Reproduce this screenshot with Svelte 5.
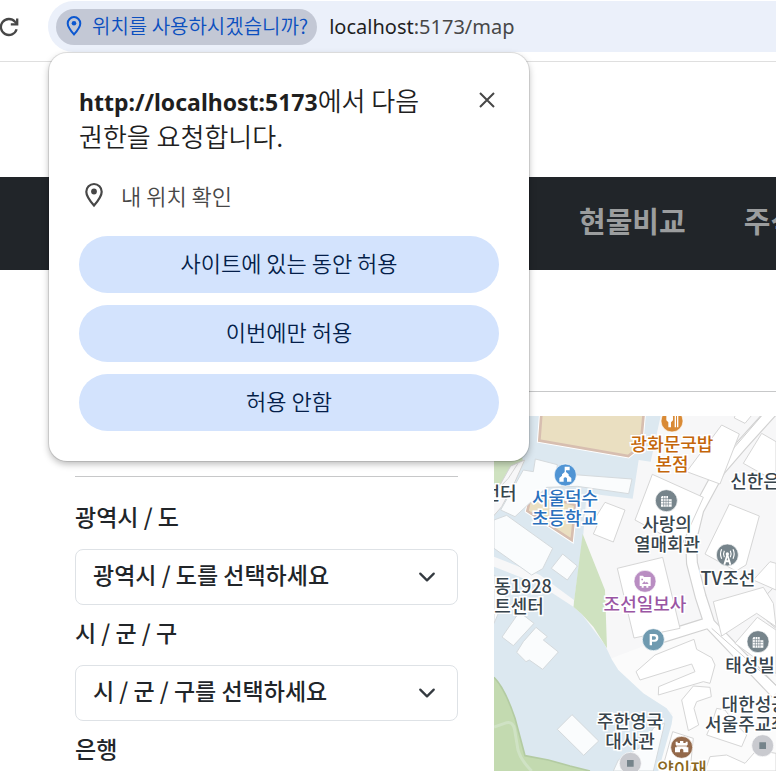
<script>
  const menu = ['현물비교', '주식비교'];

  const fields = [
    { id: 'province', label: '광역시 / 도', placeholder: '광역시 / 도를 선택하세요' },
    { id: 'district', label: '시 / 군 / 구', placeholder: '시 / 군 / 구를 선택하세요' }
  ];

  const choices = ['사이트에 있는 동안 허용', '이번에만 허용', '허용 안함'];

  // Top centre of each label, in map pixels
  const places = [
    { x: 178, y: 17, kind: 'food', lines: ['광화문국밥', '본점'] },
    { x: 71, y: 71, kind: 'school', lines: ['서울덕수', '초등학교'] },
    { x: 6, y: 66, kind: 'plain', lines: ['전터'] },
    { x: 261, y: 54, kind: 'plain', lines: ['신한은'] },
    { x: 173, y: 97, kind: 'plain', lines: ['사랑의', '열매회관'] },
    { x: 234, y: 151, kind: 'plain', lines: ['TV조선'] },
    { x: 151, y: 177, kind: 'art', lines: ['조선일보사'] },
    { x: 29, y: 159, kind: 'plain', lines: ['동1928'] },
    { x: 25, y: 179, kind: 'plain', lines: ['트센터'] },
    { x: 256, y: 238, kind: 'plain', lines: ['태성빌'] },
    { x: 269, y: 277, kind: 'plain', lines: ['대한성공회', '서울주교좌성당'] },
    { x: 136, y: 294, kind: 'plain', lines: ['주한영국', '대사관'] },
    { x: 188, y: 342, kind: 'heritage', lines: ['양이재'] }
  ];
</script>

<div class="browser">
  <header class="toolbar">
    <button class="reload" aria-label="새로고침">
      <svg width="22" height="22" viewBox="0 0 22 22" fill="none" stroke="#474747" stroke-width="2.3">
        <path d="M18.6 13.2A8 8 0 1 1 17 5.8l2 2.1" />
        <path d="M19.2 2.4v6h-6.4" />
      </svg>
    </button>
    <div class="omnibox">
      <button class="chip">
        <svg width="16" height="20" viewBox="0 0 16 20" fill="none" stroke="#0b57d0" stroke-width="2">
          <path d="M8 18.4C4 13.8 1.7 10.6 1.7 7.4a6.3 6.3 0 0 1 12.6 0c0 3.200-2.300 6.400-6.300 11z" />
          <circle cx="8" cy="7.300" r="2.300" fill="#0b57d0" stroke="none" />
        </svg>
        <span>위치를 사용하시겠습니까?</span>
      </button>
      <span class="url"><b>localhost</b>:5173/map</span>
    </div>
  </header>

  <nav class="navbar">
    {#each menu as item}
      <a href="#menu">{item}</a>
    {/each}
  </nav>

  <main>
    <hr />
    <div class="columns">
      <form class="filters">
        <hr />
        {#each fields as field}
          <label for={field.id}>{field.label}</label>
          <div class="select">
            <select id={field.id}>
              <option>{field.placeholder}</option>
            </select>
            <svg width="18" height="18" viewBox="0 0 16 16" fill="none" stroke="#343a40" stroke-width="2" stroke-linecap="round" stroke-linejoin="round">
              <path d="m2 5 6 6 6-6" />
            </svg>
          </div>
        {/each}
        <h2>은행</h2>
      </form>

      <section class="map" aria-label="지도">
        <svg width="282" height="355" viewBox="12 18 846 1065">
          <rect x="12" y="18" width="846" height="1065" fill="#f7f7f8" />
          <path fill="#fbfbfb" d="M351 750 640 640 858 800V1083H500L548 910 460 850z" />

          <!-- school and embassy grounds -->
          <path fill="#dce8f0" d="M12 18H512L482 155 446 150 428 266 290 250 280 372 250 590 275 612 345 705 365 748 385 780 460 850 530 895 548 920 545 942 505 1083H12z" />
          <path fill="#cfe2c0" d="M278 372 345 540 351 715 310 650 275 612 250 590z" />
          <path fill="#cfe2c0" d="M12 18H60L100 155 12 245z" />
          <path fill="#f7f7f8" stroke="#d4d4d4" stroke-width="3" d="M104 150 62 168 30 225 0 265V330L35 290 75 215z" />
          <path fill="none" stroke="#d4d4d4" stroke-width="3" d="M84 160 55 205 0 262" />
          <path fill="#c3dab0" d="M12 802C40 830 60 880 75 925L105 1037 175 1050 240 1068 300 1083H12z" />
          <path fill="none" stroke="#b3cba2" stroke-width="5" d="M12 802C40 830 60 880 75 925L105 1037 175 1050 240 1068 300 1083" />
          <path fill="none" stroke="#cfe2c4" stroke-width="9" d="M12 951 50 938Q70 934 74 960L84 1020Q92 1050 125 1083" />
          <path fill="#f7f7f8" d="M12 440 150 495 252 570 250 590 150 525 12 470z" />

          <!-- sports grounds -->
          <g fill="#eadfc1" stroke="#fff" stroke-width="14">
            <path d="M155 0 148 92 415 138 452 108 462 0z" />
            <path d="M125 248 112 303 245 390 256 285z" />
          </g>
          <g fill="#eadfc1" stroke="#d7beb0" stroke-width="8">
            <path d="M155 0 148 92 415 138 452 108 462 0z" />
            <path d="M125 248 112 303 245 390 256 285z" />
          </g>

          <!-- roads -->
          <g fill="none" stroke-linejoin="round">
            <path stroke="#d2d2d2" stroke-width="36" d="M850 0 755 105 690 180 625 300 603 390 606 460 632 560 658 640 858 850M490 690 650 640" />
            <path stroke="#fff" stroke-width="29" d="M850 0 755 105 690 180 625 300 603 390 606 460 632 560 658 640 858 850M490 690 650 640" />
            <path stroke="#cfcfcf" stroke-width="3" d="M830 0 735 110 665 205M665 655 858 825M858 525 800 585Q795 598 805 610L858 655" />
          </g>

          <!-- buildings -->
          <g fill="#fafcfd" stroke="#d5dadd" stroke-width="3">
            <path d="M136 147 202 164 200 190 426 207 416 251 262 229 170 232 75 320 32 300 100 180 130 185z" />
            <path d="M12 330 50 316 188 415 158 476 125 495 12 415z" />
            <path d="M218 432 262 468 232 510 184 475z" />
            <path d="M12 495 60 530 25 610 12 640z" />
            <path d="M88 606 132 640 70 707 36 681z" />
            <path d="M138 652 172 680 160 690 205 726 158 778 118 750 108 755 80 727 100 695z" />
            <path d="M246 914 326 993 281 1036 202 958z" />
            <path d="M370 1083 385 1050 455 1010 492 952 524 940 490 1083z" />
          </g>
          <g fill="#fff" stroke="#d6d6d6" stroke-width="3">
            <path d="M487 193 640 262 575 405 435 330z" />
            <path d="M695 45 748 72 690 222 590 185z" />
            <path d="M740 0 790 10 765 40 733 24z" />
            <path d="M815 70 858 95V215L760 160z" />
            <path d="M345 277 405 300 370 396 310 372 322 345 307 338z" />
            <path d="M718 282 808 318 768 465 738 483 645 432z" />
            <path d="M382 475 518 442 570 655 432 684z" />
            <path d="M670 575 820 532 850 580 858 650 800 610 695 678z" />
            <path d="M790 510 840 455 858 460V540z" />
            <path d="M802 622 858 660V790L735 700z" />
            <path d="M438 785 495 735 612 688 620 718 665 743 675 765 660 820 640 815 505 855 506 830 615 785 605 762 450 810z" />
            <path d="M575 870 610 828 660 832 664 860 620 875 612 895 626 945 595 962z" />
            <path d="M680 895 705 900 735 940 770 975 755 1010 650 975 665 940z" />
            <path d="M548 965 610 985 600 1083 515 1083z" />
            <path d="M660 1040 710 1035 765 1060 800 1020 858 1030V1083H645z" />
          </g>

          <!-- pins -->
          <g stroke="#fff" stroke-width="2">
            <circle cx="546" cy="33" r="33" fill="#d98a35" />
            <circle cx="226" cy="195" r="33" fill="#4f94d4" />
            <circle cx="529" cy="272" r="33" fill="#76848b" />
            <circle cx="712" cy="435" r="33" fill="#76848b" />
            <circle cx="465" cy="514" r="33" fill="#b98dc2" />
            <circle cx="490" cy="689" r="33" fill="#6f9ab0" />
            <circle cx="804" cy="695" r="33" fill="#76848b" />
            <circle cx="575" cy="1012" r="33" fill="#94694a" />
            <circle cx="421" cy="1060" r="33" fill="#c9cacf" />
            <circle cx="818" cy="1007" r="33" fill="#c9cacf" />
          </g>
          <g fill="#fff">
            <path d="M529 20Q529 14 535 14H543Q549 14 549 22V31L543 37V52H535V37L529 31z" />
            <path d="M554 14H558V52H554zM561 14H565V52H561z" />
            <path d="M224 170H239V181H228V186L236 193V197L244 204V215H231V205Q226 198 221 205V215H208V204L216 197V193L224 186z" />
            <path d="M516 258H534V268H545V290H513V262z" />
            <path d="M791 681H809V691H820V713H788V685z" />
            <path d="M709 435H715L724 464H718L716 457H708L706 464H700zM712 442 710 451H714z" />
            <circle cx="712" cy="432" r="5" />
            <path d="M449 497H459L462 501H482V528H475V533H469V528H461V533H455V528H449z" />
            <path fill-rule="evenodd" d="M479 672H494Q505 672 505 683T494 695H486V706H479zM486 679V689H493Q498 689 498 684T493 679z" />
            <path d="M557 995H563V999H570V993H580V999H587V995H593V1004L590 1007V1012H595V1027H580V1019Q575 1013 570 1019V1027H555V1012H560V1007L557 1004z" />
          </g>
          <g fill="none" stroke="#76848b" stroke-width="2">
            <path d="M521 258V290M528 258V290M535 268V290M513 266H534M513 274H545M513 282H545" />
            <path d="M796 681V713M803 681V713M810 691V713M788 689H809M788 697H820M788 705H820" />
          </g>
          <g fill="none" stroke="#fff" stroke-width="3.500">
            <path d="M703 422Q698 432 703 442M695 418Q688 432 695 446M721 422Q726 432 721 442M729 418Q736 432 729 446" />
          </g>
          <path fill="#b98dc2" d="M454 506H459V511H454zM456 522 463 514 467 518 471 515 476 522z" />
          <path stroke="#94694a" stroke-width="2" d="M560 1008H590" />
          <g fill="#76848b">
            <path d="M411 1050H431V1070H411zM808 997H828V1017H808z" />
          </g>
        </svg>
        {#each places as place}
          <div class="place {place.kind}" style="left: {place.x}px; top: {place.y}px">
            {#each place.lines as line}
              <span>{line}</span>
            {/each}
          </div>
        {/each}
      </section>
    </div>
  </main>

  <div class="prompt" role="dialog" aria-labelledby="prompt-title">
    <div class="prompt-head">
      <h1 id="prompt-title"><strong>http://localhost:5173</strong>에서 다음 권한을 요청합니다.</h1>
      <button class="close" aria-label="닫기">
        <svg width="16" height="16" viewBox="0 0 16 16" stroke="#474747" stroke-width="2">
          <path d="m1 1 14 14M15 1 1 15" />
        </svg>
      </button>
    </div>
    <p class="permission">
      <svg width="20" height="26" viewBox="0 0 20 26" fill="none" stroke="#474747" stroke-width="2.200">
        <path d="M10 23.500C5 17.800 2.300 13.800 2.300 9.700a7.700 7.700 0 0 1 15.400 0c0 4.100-2.700 8.100-7.700 13.800z" />
        <circle cx="10" cy="9.500" r="2.900" fill="#474747" stroke="none" />
      </svg>
      내 위치 확인
    </p>
    <div class="choices">
      {#each choices as choice}
        <button>{choice}</button>
      {/each}
    </div>
  </div>
</div>

<style>
  :global(body) {
    margin: 0;
  }

  .browser {
    position: relative;
    height: 100vh;
    overflow: hidden;
    background: #fff;
    color: #212529;
    font-family: 'Noto Sans CJK KR', sans-serif;
  }

  button {
    border: 0;
    padding: 0;
    background: none;
    font-family: inherit;
  }

  .toolbar {
    display: flex;
    align-items: center;
    gap: 28px;
    height: 53px;
    padding-bottom: 8px;
    border-bottom: 1px solid #dfdfdf;
  }

  .reload {
    display: flex;
    margin-left: -2px;
  }

  .omnibox {
    display: flex;
    flex: 1;
    align-items: center;
    gap: 12px;
    height: 51px;
    padding-left: 8px;
    border-radius: 26px 0 0 26px;
    background: #ebf0fa;
  }

  .chip {
    display: flex;
    align-items: center;
    gap: 10px;
    height: 36px;
    padding: 0 9px 2px 10px;
    border-radius: 18px;
    background: #c3c8d5;
    color: #0b4fbf;
    font-size: 20px;
    font-weight: 350;
    line-height: 30px;
    white-space: nowrap;
  }

  .url {
    color: #474747;
    font-family: 'Noto Sans', sans-serif;
    font-size: 20px;
    line-height: 30px;
  }

  .url b {
    color: #1f1f1f;
    font-weight: 400;
  }

  .navbar {
    display: flex;
    align-items: center;
    gap: 58px;
    height: 93px;
    margin-top: 115px;
    padding-left: 579px;
    background: #212529;
  }

  .navbar a {
    color: #9b9d9e;
    font-size: 29px;
    font-weight: 700;
    line-height: 40px;
    text-decoration: none;
    white-space: nowrap;
    padding-bottom: 8px;
  }

  main {
    padding: 121px 0 0 75px;
  }

  hr {
    height: 1px;
    margin: 0;
    border: 0;
    background: #c7c8c9;
  }

  .columns {
    display: grid;
    grid-template-columns: 383px 1fr;
    gap: 36px;
    padding-top: 24px;
  }

  .filters {
    padding-top: 60px;
  }

  .filters hr {
    margin-bottom: 12px;
  }

  .filters label,
  .filters h2 {
    display: block;
    margin: 0;
    padding: 10px 0 16px;
    font-size: 23px;
    font-weight: 500;
    line-height: 34px;
  }

  .select {
    position: relative;
  }

  select {
    display: block;
    width: 100%;
    height: 56px;
    padding: 0 48px 6px 17px;
    border: 1px solid #dee2e6;
    border-radius: 8px;
    background: #fff;
    color: #212529;
    font-family: inherit;
    font-size: 23px;
    font-weight: 500;
    appearance: none;
  }

  .select svg {
    position: absolute;
    top: 19px;
    right: 22px;
    pointer-events: none;
  }

  .map {
    position: relative;
    overflow: hidden;
    background: #f7f7f8;
  }

  .map svg {
    display: block;
  }

  .place {
    position: absolute;
    display: flex;
    flex-direction: column;
    align-items: center;
    transform: translateX(-50%);
    color: #37444c;
    font-size: 18px;
    font-weight: 500;
    line-height: 20px;
    white-space: nowrap;
    -webkit-text-stroke: 3px #fff;
    paint-order: stroke fill;
  }

  .food {
    color: #c4660a;
  }

  .school {
    color: #2a70bd;
  }

  .art {
    color: #9a56a4;
  }

  .heritage {
    color: #8a6720;
  }

  .prompt {
    position: absolute;
    top: 53px;
    left: 49px;
    box-sizing: border-box;
    width: 480px;
    padding: 29px 30px 30px;
    border-radius: 18px;
    background: #fff;
    box-shadow: 0 0 0 1px rgba(0, 0, 0, 0.1), 0 3px 7px rgba(0, 0, 0, 0.28);
  }

  .prompt-head {
    display: flex;
    align-items: flex-start;
    justify-content: space-between;
  }

  h1 {
    width: 360px;
    margin: 0;
    color: #1f1f1f;
    font-size: 26px;
    font-weight: 350;
    line-height: 36px;
    word-break: keep-all;
  }

  h1 strong {
    font-family: 'Noto Sans', sans-serif;
    font-size: 23px;
    font-weight: 700;
    line-height: 24px;
  }

  .close {
    display: flex;
    padding: 10px 4px;
  }

  .permission {
    display: flex;
    align-items: center;
    gap: 17px;
    margin: 26px 0;
    padding-left: 5px;
    color: #474747;
    font-size: 22px;
    font-weight: 350;
    line-height: 30px;
  }

  .choices {
    display: flex;
    flex-direction: column;
    gap: 12px;
  }

  .choices button {
    height: 57px;
    padding-bottom: 5px;
    border-radius: 29px;
    background: #d3e3fd;
    color: #041e49;
    font-size: 22px;
    font-weight: 350;
  }
</style>
